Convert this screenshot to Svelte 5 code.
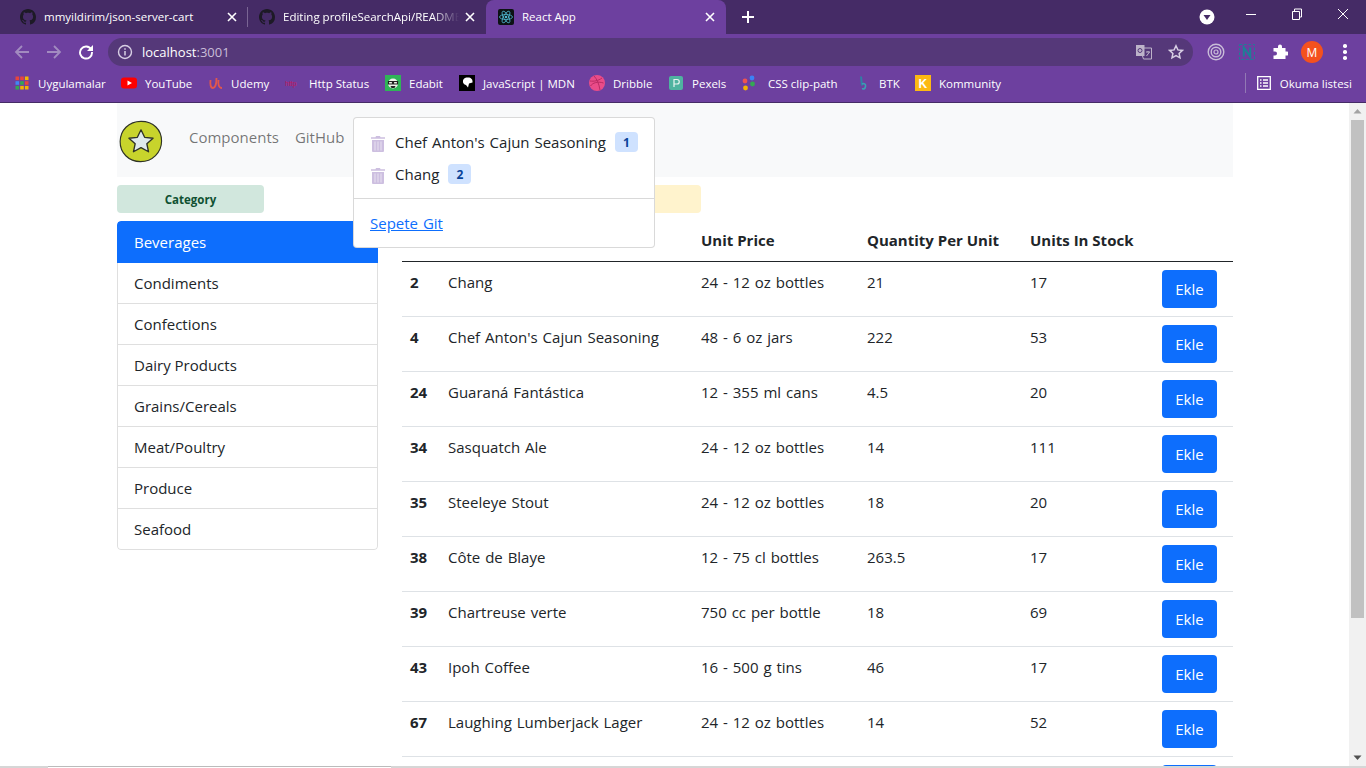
<script>
	const ghPath =
		"M8 0C3.58 0 0 3.58 0 8c0 3.54 2.29 6.53 5.47 7.59.4.07.55-.17.55-.38 0-.19-.01-.82-.01-1.49-2.01.37-2.53-.49-2.69-.94-.09-.23-.48-.94-.82-1.13-.28-.15-.68-.52-.01-.53.63-.01 1.08.58 1.23.82.72 1.21 1.87.87 2.33.66.07-.52.28-.87.51-1.07-1.78-.2-3.64-.89-3.64-3.95 0-.87.31-1.59.82-2.15-.08-.2-.36-1.02.08-2.12 0 0 .67-.21 2.2.82.64-.18 1.32-.27 2-.27.68 0 1.36.09 2 .27 1.53-1.04 2.2-.82 2.2-.82.44 1.1.16 1.92.08 2.12.51.56.82 1.27.82 2.15 0 3.07-1.87 3.75-3.65 3.95.29.25.54.73.54 1.48 0 1.07-.01 1.93-.01 2.2 0 .21.15.46.55.38A8.013 8.013 0 0016 8c0-4.42-3.58-8-8-8z";

	const bookmarks = [
		{ name: "Uygulamalar", icon: "apps", w: 107, gap: 8 },
		{ name: "YouTube", icon: "yt", w: 87, gap: 8 },
		{ name: "Udemy", icon: "udemy", w: 77, gap: 7 },
		{ name: "Http Status", icon: "http", w: 100, gap: 8 },
		{ name: "Edabit", icon: "edabit", w: 74, gap: 8 },
		{ name: "JavaScript | MDN", icon: "mdn", w: 130, gap: 8 },
		{ name: "Dribble", icon: "dribbble", w: 79, gap: 8 },
		{ name: "Pexels", icon: "pexels", w: 73, gap: 8 },
		{ name: "CSS clip-path", icon: "css", w: 114, gap: 11 },
		{ name: "BTK", icon: "btk", w: 60, gap: 8 },
		{ name: "Kommunity", icon: "k", w: 100, gap: 8 }
	];

	const categories = [
		"Beverages",
		"Condiments",
		"Confections",
		"Dairy Products",
		"Grains/Cereals",
		"Meat/Poultry",
		"Produce",
		"Seafood"
	];

	const products = [
		[2, "Chang", "24 - 12 oz bottles", 21, 17],
		[4, "Chef Anton's Cajun Seasoning", "48 - 6 oz jars", 222, 53],
		[24, "Guaraná Fantástica", "12 - 355 ml cans", 4.5, 20],
		[34, "Sasquatch Ale", "24 - 12 oz bottles", 14, 111],
		[35, "Steeleye Stout", "24 - 12 oz bottles", 18, 20],
		[38, "Côte de Blaye", "12 - 75 cl bottles", 263.5, 17],
		[39, "Chartreuse verte", "750 cc per bottle", 18, 69],
		[43, "Ipoh Coffee", "16 - 500 g tins", 46, 17],
		[67, "Laughing Lumberjack Lager", "24 - 12 oz bottles", 14, 52]
	];

	const cart = [
		{ name: "Chef Anton's Cajun Seasoning", qty: 1 },
		{ name: "Chang", qty: 2 }
	];
</script>

{#snippet trash()}
	<svg class="trash" width="14" height="16" viewBox="0 0 14 16">
		<path fill="#cdbfe0" d="M5 0h4l.5 1.2H14v1.6H0V1.2h4.500zM1 4h12v11a1 1 0 0 1-1 1H2a1 1 0 0 1-1-1z" />
		<path stroke="#e9e2f1" stroke-width="1" d="M4 5.500v9M7 5.500v9M10 5.500v9" />
	</svg>
{/snippet}

{#snippet ghIcon()}
	<svg width="16" height="16" viewBox="0 0 16 16"><path fill="#1d1a26" d={ghPath} /></svg>
{/snippet}

{#snippet tabClose()}
	<svg class="tab-x" width="10" height="10" viewBox="0 0 10 10"><path stroke="#fff" stroke-width="1.6" d="M1 1l8 8M9 1l-8 8" /></svg>
{/snippet}

<div class="screen">
	<header class="chrome">
		<div class="tabstrip">
			<div class="tab tab--one">
				{@render ghIcon()}
				<span class="tab-title">mmyildirim/json-server-cart</span>
				{@render tabClose()}
			</div>
			<i class="tab-sep"></i>
			<div class="tab tab--two">
				{@render ghIcon()}
				<span class="tab-title tab-title--fade">Editing profileSearchApi/README.md</span>
				{@render tabClose()}
			</div>
			<div class="tab tab--active">
				<svg width="16" height="16" viewBox="0 0 16 16">
					<rect width="16" height="16" rx="2" fill="#0c1214" />
					<g fill="none" stroke="#4fb6cf" stroke-width="0.8">
						<ellipse cx="8" cy="8" rx="6.500" ry="2.500" />
						<ellipse cx="8" cy="8" rx="6.500" ry="2.500" transform="rotate(60 8 8)" />
						<ellipse cx="8" cy="8" rx="6.500" ry="2.500" transform="rotate(120 8 8)" />
					</g>
					<circle cx="8" cy="8" r="1.300" fill="#4fb6cf" />
				</svg>
				<span class="tab-title">React App</span>
				{@render tabClose()}
			</div>
			<svg class="new-tab" width="14" height="14" viewBox="0 0 14 14"><path stroke="#fff" stroke-width="2" d="M7 1v12M1 7h12" /></svg>
			<div class="win-controls">
				<svg class="win-menu" width="18" height="18" viewBox="0 0 18 18">
					<circle cx="9" cy="9" r="7.500" fill="#fff" />
					<path fill="#452b66" d="M5.500 7h7L9 12z" />
				</svg>
				<svg class="win-btn" width="46" height="30" viewBox="0 0 46 30"><path stroke="#fff" d="M18 14.500h10" /></svg>
				<svg class="win-btn" width="46" height="30" viewBox="0 0 46 30">
					<path fill="none" stroke="#fff" d="M18.500 11.500h7v8h-7zM20.500 11.500v-2.500h7v8h-2" />
				</svg>
				<svg class="win-btn" width="46" height="30" viewBox="0 0 46 30"><path stroke="#fff" d="M18 9l10 10M28 9L18 19" /></svg>
			</div>
		</div>

		<div class="toolbar">
			<div class="nav-btns">
				<svg width="16" height="16" viewBox="0 0 16 16"><path fill="none" stroke="#a28bc0" stroke-width="1.800" d="M15 8H2M8 2L2 8l6 6" /></svg>
				<svg width="16" height="16" viewBox="0 0 16 16"><path fill="none" stroke="#a28bc0" stroke-width="1.800" d="M1 8h13M8 2l6 6-6 6" /></svg>
				<svg width="16" height="16" viewBox="0 0 16 16">
					<path fill="none" stroke="#fff" stroke-width="1.900" d="M13.200 5.500A6 6 0 1 0 14 8" />
					<path fill="#fff" d="M15 1v6H9z" />
				</svg>
			</div>
			<div class="omnibox">
				<svg width="16" height="16" viewBox="0 0 16 16">
					<circle cx="8" cy="8" r="6.500" fill="none" stroke="#d8cfe4" stroke-width="1.400" />
					<path stroke="#d8cfe4" stroke-width="1.500" d="M8 7v4.500M8 4.200v1.600" />
				</svg>
				<span class="url"><b>localhost</b>:3001</span>
				<div class="omni-right">
					<svg width="16" height="16" viewBox="0 0 16 16">
						<path fill="#bdb3c9" d="M0 1h8.500v11H0z" />
						<path fill="none" stroke="#bdb3c9" d="M8 4h7.500v11H7.500l-1-3" />
						<circle cx="4" cy="6.500" r="2" fill="none" stroke="#553879" />
						<path stroke="#bdb3c9" d="M10 8h4M12 7v1M10.500 12l3-4" />
					</svg>
					<svg width="16" height="16" viewBox="0 0 16 16">
						<path fill="none" stroke="#d8cfe4" stroke-width="1.500" d="M8 1.800l1.900 4.100 4.500.5-3.300 3 .9 4.400L8 11.600l-4 2.200.9-4.400-3.300-3 4.500-.5z" />
					</svg>
				</div>
			</div>
			<div class="extensions">
				<svg width="18" height="18" viewBox="0 0 18 18" fill="none" stroke="#c9bdd8">
					<circle cx="9" cy="9" r="7.800" stroke-width="1.400" />
					<circle cx="9" cy="9" r="4.800" stroke-width="1.400" />
					<circle cx="9" cy="9" r="2" stroke-width="1.200" />
				</svg>
				<svg class="ext-n" width="16" height="16" viewBox="0 0 16 16" fill="none" stroke="#1d7f96">
					<path stroke-dasharray="2.500 2" d="M.5.500h15v15H.5z" />
					<path stroke-width="2" d="M4.800 12.500v-9l6.400 9v-9" />
				</svg>
				<svg class="ext-puzzle" width="16" height="16" viewBox="0 0 16 16">
					<path fill="#fff" d="M6 2.500a2 2 0 0 1 4 0V4h3.500v3.500H15a2 2 0 0 1 0 4h-1.500V15H1.500v-3.500H3a2 2 0 0 0 0-4H1.500V4H6z" />
				</svg>
				<span class="avatar">M</span>
				<span class="dots"><i></i><i></i><i></i></span>
			</div>
		</div>

		<div class="bookmarks">
			{#each bookmarks as b}
				<div class="bookmark" style:width="{b.w}px" style:gap="{b.gap}px">
					<svg width="16" height="16" viewBox="0 0 16 16">
						{#if b.icon === "apps"}
							<g>
								{#each ["#e8453c", "#e8453c", "#f4b400", "#4285f4", "#34a853", "#e8453c", "#34a853", "#f4b400", "#f4b400"] as c, i}
									<rect x={1.500 + (i % 3) * 4.700} y={1.500 + Math.floor(i / 3) * 4.700} width="3.600" height="3.600" fill={c} />
								{/each}
							</g>
						{:else if b.icon === "yt"}
							<rect y="2.500" width="16" height="11" rx="3" fill="#f00" />
							<path fill="#fff" d="M6.500 5.500L11 8l-4.500 2.500z" />
						{:else if b.icon === "udemy"}
							<path fill="none" stroke="#e2574c" stroke-width="1.800" d="M2.500 5c-.5 4 0 8 2.500 8s3.500-5 3.500-10M10.500 5c-.5 4 0 8 3.500 8" />
						{:else if b.icon === "http"}
							<text x="0" y="11" class="http-mark">http</text>
						{:else if b.icon === "edabit"}
							<rect width="16" height="16" fill="#2fb457" />
							<circle cx="8" cy="8.500" r="5" fill="#eef3ea" />
							<path fill="none" stroke="#222" stroke-width="1.200" d="M3.500 6.500h4v2.500h-4zM8.500 6.500h4v2.500h-4z" />
							<path fill="#222" d="M5.500 11h5l-1 2h-3z" />
						{:else if b.icon === "mdn"}
							<rect width="16" height="16" fill="#000" />
							<path fill="#fff" d="M4 5.500C4.500 3 7 2.500 9 2.500c3 0 5 2 4.500 5-1 .5-2.500.5-3.500 1l-1 4-2-2.500C5 9.500 3.500 8 4 5.500z" />
						{:else if b.icon === "dribbble"}
							<circle cx="8" cy="8" r="8" fill="#ea4c89" />
							<path fill="none" stroke="#b92b63" d="M5 1c3 3 5 8 6 14M1 6c4 .5 8 0 12-3M1.500 11c2-3 7-5 13-3" />
						{:else if b.icon === "pexels"}
							<rect x="1" y="1" width="14" height="14" rx="2" fill="#4fb3a0" />
							<path fill="none" stroke="#e8f4f1" stroke-width="1.200" d="M6 12V4.500h3a2 2 0 0 1 0 4.500H6" />
						{:else if b.icon === "css"}
							<circle cx="11" cy="3" r="2.400" fill="#3b82f6" />
							<circle cx="4" cy="6" r="2.400" fill="#ef5350" />
							<circle cx="11.500" cy="9" r="2.400" fill="#34a853" />
							<circle cx="4.500" cy="13" r="2.400" fill="#f4b400" />
						{:else if b.icon === "btk"}
							<path fill="none" stroke="#2f7fa6" stroke-width="2" d="M6 1.500l1 9" />
							<path fill="none" stroke="#3a9fb5" stroke-width="1.600" d="M7 9c2-1 4 0 3.500 2.500S8 15 7.500 13" />
						{:else if b.icon === "k"}
							<rect width="16" height="16" fill="#fdb913" />
							<text x="3.500" y="12.500" class="k-mark">K</text>
						{/if}
					</svg>
					<span>{b.name}</span>
				</div>
			{/each}
			<div class="reading">
				<i class="read-sep"></i>
				<svg width="14" height="14" viewBox="0 0 14 14">
					<path fill="none" stroke="#fff" stroke-width="1.300" d="M.7.700h12.600v12.600H.700z" />
					<path stroke="#fff" stroke-width="1.400" d="M3 4h1.500M6 4h5M3 7h1.500M6 7h5M3 10h1.500M6 10h5" />
				</svg>
				<span>Okuma listesi</span>
			</div>
		</div>
	</header>

	<div class="viewport">
		<div class="scroller">
			<div class="container">
				<nav class="navbar">
					<svg class="logo" width="44" height="43" viewBox="0 0 46 46" preserveAspectRatio="none">
						<path fill="#c8d42c" stroke="#2f3326" stroke-width="1.200" d="M23 1.500c13 0 21.500 9 21.500 21S35 44.500 22.500 44.500 1 35 1.200 23 10 1.500 23 1.500z" />
						<path fill="#dfeaec" stroke="#2f3326" stroke-width="1.400" stroke-linejoin="round" d="M23 10.500l3.800 8 8.800 1-6.500 5.900 1.800 8.600-7.900-4.400-7.900 4.400 1.800-8.600-6.500-5.900 8.800-1z" />
					</svg>
					<a class="nav-link" href="#components">Components</a>
					<a class="nav-link" href="#github">GitHub</a>

					<div class="cart-menu">
						<ul class="cart-list">
							{#each cart as item}
								<li class="cart-item">
									{@render trash()}
									<span class="cart-name">{item.name}</span>
									<span class="badge">{item.qty}</span>
								</li>
							{/each}
						</ul>
						<hr class="cart-divider" />
						<a class="cart-link" href="#cart">Sepete Git</a>
					</div>
				</nav>

				<div class="content">
					<aside class="sidebar">
						<div class="pill">Category</div>
						<ul class="list-group">
							{#each categories as c, i}
								<li class="list-item" class:active={i === 0}>{c}</li>
							{/each}
						</ul>
					</aside>

					<main class="main">
						<div class="notice"></div>
						<table class="table">
							<colgroup>
								<col style="width: 38px" />
								<col style="width: 253px" />
								<col style="width: 166px" />
								<col style="width: 163px" />
								<col style="width: 124px" />
								<col />
							</colgroup>
							<thead>
								<tr>
									<!-- first two headings sit behind the open cart menu -->
									<th></th>
									<th></th>
									<th>Unit Price</th>
									<th>Quantity Per Unit</th>
									<th>Units In Stock</th>
									<th></th>
								</tr>
							</thead>
							<tbody>
								{#each products as p}
									<tr>
										<th>{p[0]}</th>
										<td>{p[1]}</td>
										<td>{p[2]}</td>
										<td>{p[3]}</td>
										<td>{p[4]}</td>
										<td class="action"><button class="btn" type="button">Ekle</button></td>
									</tr>
								{/each}
								<!-- next row only shows the top edge of its button above the fold -->
								<tr>
									<th></th>
									<td></td>
									<td></td>
									<td></td>
									<td></td>
									<td class="action"><button class="btn" type="button" aria-label="Ekle"></button></td>
								</tr>
							</tbody>
						</table>
					</main>
				</div>
			</div>
		</div>

		<div class="scrollbar">
			<svg width="17" height="17" viewBox="0 0 17 17"><path fill="#a3a3a3" d="M8.500 6l4 4.500h-8z" /></svg>
			<div class="thumb"></div>
			<svg class="arrow-down" width="17" height="17" viewBox="0 0 17 17"><path fill="#505050" d="M8.500 11l-4-4.500h8z" /></svg>
		</div>
	</div>

	<div class="hbar"><i class="hbar-thumb"></i></div>
</div>

<style>
	:global(body) {
		margin: 0;
		overflow: hidden;
		background: #fff;
	}

	.screen {
		width: 1366px;
		height: 768px;
		display: flex;
		flex-direction: column;
		overflow: hidden;
		font-family: "Open Sans", "Noto Sans", sans-serif;
		font-size: 15px;
		color: #212529;
	}

	.chrome {
		flex: 0 0 103px;
		background: #6d409f;
		border-bottom: 1px solid #452b66;
		box-sizing: border-box;
		color: #fff;
	}

	.tabstrip {
		height: 34px;
		background: #452b66;
		display: flex;
		align-items: stretch;
		position: relative;
	}

	.tab {
		display: flex;
		align-items: center;
		box-sizing: border-box;
		font-size: 11.5px;
		white-space: nowrap;
		height: 34px;
		min-width: 0;
	}

	.tab--one {
		width: 247px;
		padding: 0 10px 0 20px;
	}

	.tab--two {
		width: 238px;
		padding: 0 11px 0 11px;
	}

	.tab--active {
		width: 240px;
		padding: 0 11px 0 12px;
		background: #6d409f;
		border-radius: 8px 8px 0 0;
	}

	.tab-sep {
		width: 1px;
		height: 20px;
		margin-top: 7px;
		background: #7a6594;
	}

	.tab-title {
		flex: 1;
		min-width: 0;
		overflow: hidden;
		margin-left: 8px;
		margin-top: -2px;
	}

	.tab-title--fade {
		-webkit-mask-image: linear-gradient(90deg, #000 85%, transparent);
		mask-image: linear-gradient(90deg, #000 85%, transparent);
	}

	.tab-x {
		flex: none;
		margin-left: 6px;
	}

	.new-tab {
		align-self: center;
		margin-left: 15px;
	}

	.win-controls {
		margin-left: auto;
		display: flex;
		align-items: flex-start;
	}

	.win-menu {
		margin: 8px 12px 0 0;
	}

	.win-btn {
		display: block;
	}

	.toolbar {
		height: 32px;
		display: flex;
		align-items: center;
		padding-top: 4px;
		box-sizing: border-box;
	}

	.nav-btns {
		width: 108px;
		padding-left: 14px;
		box-sizing: border-box;
		display: flex;
		gap: 16px;
		align-items: center;
		height: 28px;
	}

	.omnibox {
		width: 1085px;
		height: 28px;
		border-radius: 14px;
		background: #553879;
		display: flex;
		align-items: center;
		padding: 0 9px 0 9px;
		box-sizing: border-box;
	}

	.url {
		margin-left: 9px;
		font-size: 13px;
		color: #c9bdd8;
	}

	.url b {
		font-weight: 400;
		color: #fff;
	}

	.omni-right {
		margin-left: auto;
		display: flex;
		gap: 16px;
	}

	.extensions {
		flex: 1;
		display: flex;
		align-items: center;
		height: 28px;
		padding-left: 14px;
		gap: 13px;
	}

	.ext-n {
		margin-left: 1px;
	}

	.ext-puzzle {
		margin-left: 4px;
	}

	.avatar {
		width: 22px;
		height: 22px;
		border-radius: 50%;
		background: #f4511e;
		color: #fff;
		font-size: 12px;
		display: grid;
		place-items: center;
	}

	.dots {
		display: flex;
		flex-direction: column;
		gap: 2.500px;
		margin-left: 7px;
	}

	.dots i {
		width: 3.500px;
		height: 3.500px;
		background: #fff;
		border-radius: 50%;
	}

	.bookmarks {
		height: 36px;
		display: flex;
		align-items: center;
		padding: 0 0 2px 14px;
		box-sizing: border-box;
		font-size: 11.5px;
		white-space: nowrap;
	}

	.bookmark {
		display: flex;
		align-items: center;
		flex: none;
	}

	.http-mark {
		font-family: "Liberation Sans", sans-serif;
		font-size: 7px;
		fill: #c2185b;
	}

	.k-mark {
		font-family: "Liberation Sans", sans-serif;
		font-size: 12px;
		font-weight: 700;
		fill: #fff;
	}

	.reading {
		margin-left: auto;
		display: flex;
		align-items: center;
		padding-right: 14px;
	}

	.read-sep {
		width: 1px;
		height: 20px;
		background: #9279b4;
		margin-right: 11px;
	}

	.reading span {
		margin-left: 9px;
	}

	.viewport {
		flex: 1;
		min-height: 0;
		display: flex;
	}

	.scroller {
		flex: 1;
		min-width: 0;
		overflow: hidden;
	}

	.container {
		width: 1116px;
		margin-left: 117px;
	}

	.navbar {
		position: relative;
		height: 74px;
		background: #f8f9fa;
		display: flex;
		align-items: center;
		padding-left: 2px;
		box-sizing: border-box;
	}

	.logo {
		margin-right: 26px;
		margin-top: 2px;
	}

	.nav-link {
		color: rgba(0, 0, 0, 0.55);
		text-decoration: none;
		margin-right: 16px;
		margin-top: -6px;
	}

	.cart-menu {
		position: absolute;
		left: 236px;
		top: 14px;
		width: 302px;
		height: 131px;
		box-sizing: border-box;
		background: #fff;
		border: 1px solid rgba(0, 0, 0, 0.15);
		border-radius: 4px;
		z-index: 2;
		padding-top: 8px;
		word-spacing: 1px;
	}

	.cart-list {
		list-style: none;
		margin: 0;
		padding: 0;
	}

	.cart-item {
		height: 32px;
		display: flex;
		align-items: center;
		padding-left: 17px;
		white-space: nowrap;
	}

	.trash {
		flex: none;
		margin-top: 3px;
	}

	.cart-name {
		margin-left: 10px;
	}

	.badge {
		margin-left: 9px;
		min-width: 23px;
		height: 20px;
		box-sizing: border-box;
		background: #cfe2ff;
		color: #084298;
		border-radius: 4px;
		font-size: 12px;
		font-weight: 700;
		display: grid;
		place-items: center;
	}

	.cart-divider {
		border: 0;
		border-top: 1px solid rgba(0, 0, 0, 0.15);
		margin: 8px 0 14px;
	}

	.cart-link {
		color: #0d6efd;
		margin-left: 16px;
	}

	.content {
		display: flex;
		gap: 24px;
		align-items: flex-start;
	}

	.sidebar {
		width: 261px;
		flex: none;
		padding-top: 8px;
	}

	.pill {
		width: 147px;
		height: 28px;
		line-height: 29px;
		border-radius: 4px;
		background: #d1e7dd;
		color: #0f5132;
		font-size: 11.5px;
		font-weight: 700;
		text-align: center;
		margin-bottom: 8px;
	}

	.list-group {
		list-style: none;
		margin: 0;
		padding: 0;
		border-radius: 4px;
		overflow: hidden;
	}

	.list-item {
		height: 40px;
		line-height: 40px;
		padding-left: 16px;
		border: 1px solid rgba(0, 0, 0, 0.125);
		border-top: 0;
	}

	.list-item:last-child {
		border-radius: 0 0 4px 4px;
	}

	.list-item.active {
		background: #0d6efd;
		color: #fff;
		border: 0;
		padding-left: 17px;
		height: 42px;
		line-height: 42px;
		border-radius: 4px 4px 0 0;
	}

	.main {
		flex: 1;
		min-width: 0;
		padding-top: 8px;
	}

	.notice {
		width: 299px;
		height: 28px;
		border-radius: 4px;
		background: #fff3cd;
		margin-bottom: 8px;
	}

	.table {
		width: 831px;
		border-collapse: collapse;
		table-layout: fixed;
	}

	.table th,
	.table td {
		padding: 8px;
		text-align: left;
		vertical-align: top;
		line-height: 24px;
	}

	.table thead th {
		font-weight: 700;
		border-bottom: 1px solid #212529;
		padding-top: 7px;
		padding-bottom: 9px;
	}

	.table tbody th,
	.table tbody td {
		border-bottom: 1px solid #dee2e6;
		word-spacing: 1px;
	}

	.table tbody th {
		font-weight: 700;
	}

	.table tbody td.action {
		padding-right: 16px;
		text-align: right;
	}

	.btn {
		display: block;
		margin-left: auto;
		width: 55px;
		height: 38px;
		padding: 0;
		border: 0;
		border-radius: 4px;
		background: #0d6efd;
		color: #fff;
		font: inherit;
		font-size: 15px;
	}

	.scrollbar {
		flex: 0 0 17px;
		background: #f1f1f1;
		display: flex;
		flex-direction: column;
		align-items: center;
	}

	.thumb {
		width: 13px;
		height: 498px;
		background: #c1c1c1;
	}

	.arrow-down {
		margin-top: auto;
	}

	.hbar {
		flex: 0 0 2px;
		background: #d6d6d6;
		position: relative;
	}

	.hbar-thumb {
		display: block;
		margin-left: 48px;
		width: 343px;
		height: 2px;
		box-sizing: border-box;
		background: #fff;
		border-top: 1px solid #bbb;
	}
</style>
